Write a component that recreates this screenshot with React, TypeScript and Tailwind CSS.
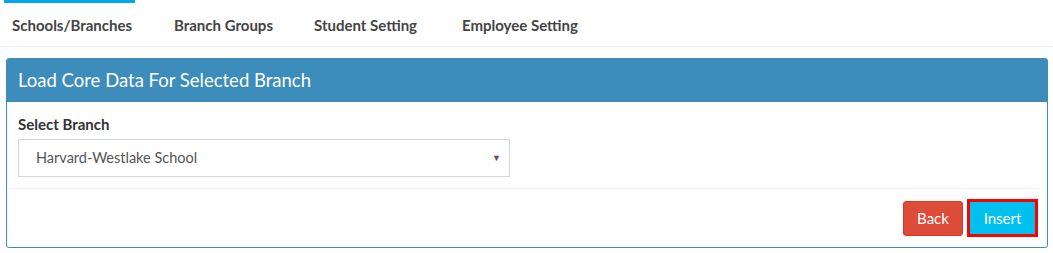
const TABS = [
  { label: "Schools/Branches", w: "w-[162px]" },
  { label: "Branch Groups", w: "w-[140px]" },
  { label: "Student Setting", w: "w-[148px]" },
  { label: "Employee Setting", w: "w-[160px]" },
];

export default function App() {
  return (
    <div className="h-[253px] w-[1053px] bg-white font-['Lato','Liberation_Sans',sans-serif] text-[#333]">
      <nav className="relative flex h-[47px] border-b border-[#f1f1f1] pl-[12px]">
        <div className="absolute left-[4px] top-0 h-[3px] w-[131px] bg-[#00a8e6]" />
        {TABS.map((t) => (
          <div
            key={t.label}
            className={`flex ${t.w} items-center pt-[4px] text-[15px] font-bold text-[#444]`}
          >
            {t.label}
          </div>
        ))}
      </nav>

      <section className="ml-[6px] mt-[11px] w-[1042px] rounded-[3px] border border-[#3c8dbc]">
        <header className="flex h-[43px] items-center bg-[#3c8dbc] px-[11px] text-[18.5px] text-white">
          Load Core Data For Selected Branch
        </header>
        <div className="px-[11px] pb-[11px] pt-[11px]">
          <label className="block text-[15px] font-bold text-[#333]">Select Branch</label>
          <div className="mt-[3px] flex h-[38px] w-[492px] items-center justify-between border border-[#d2d6de] pl-[17px] pr-[8px] text-[14.5px] text-[#555]">
            <span>Harvard-Westlake School</span>
            <span className="text-[9px] text-[#555]">▼</span>
          </div>
        </div>
        <footer className="flex h-[59px] items-center justify-end gap-[4px] border-t border-[#f4f4f4] pr-[9px] pt-[1px]">
          <button className="h-[35px] w-[60px] rounded-[3px] border border-[#d73925] bg-[#dd4b39] text-[15px] text-white">
            Back
          </button>
          <button className="h-[38px] w-[71px] border-[3px] border-[#ff0000] bg-[#00c0ef] text-[15px] text-white">
            Insert
          </button>
        </footer>
      </section>
    </div>
  );
}
